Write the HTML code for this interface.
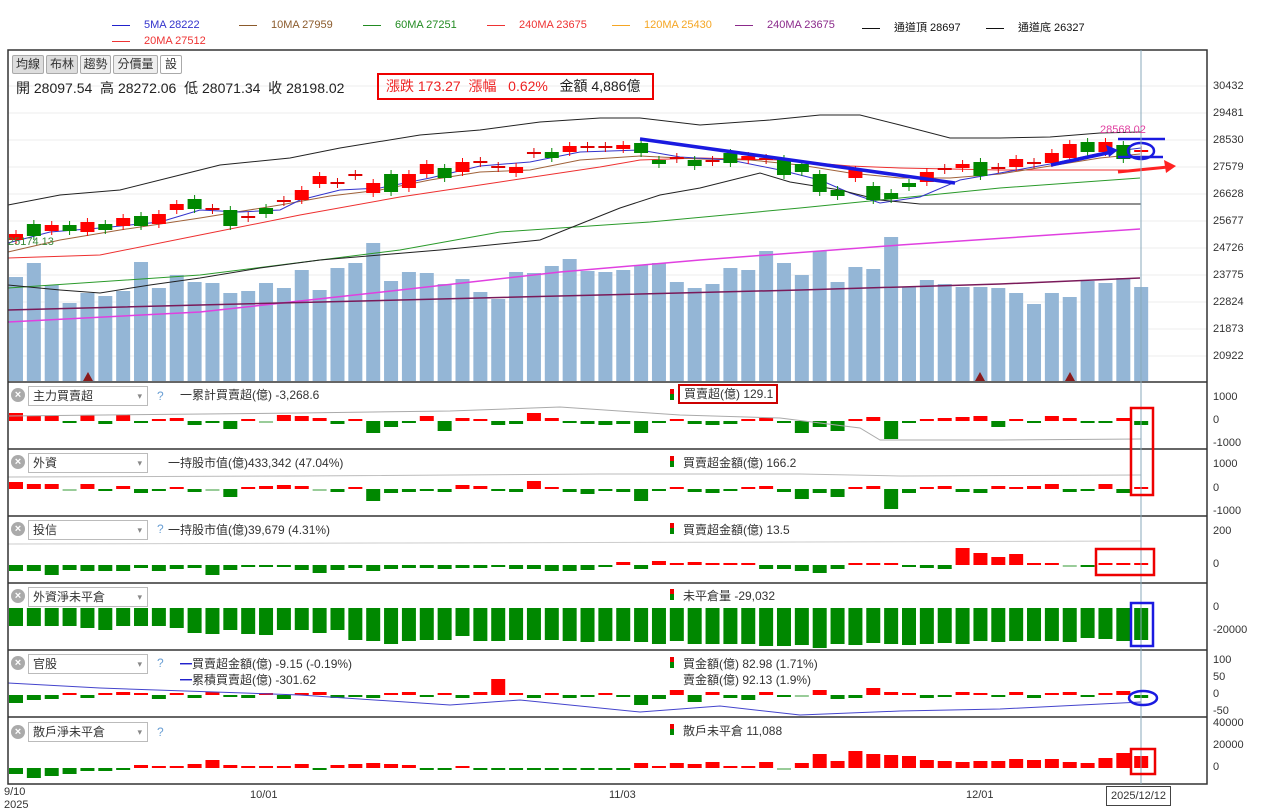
<!DOCTYPE html>
<html><head><meta charset="utf-8">
<style>
*{margin:0;padding:0;box-sizing:border-box}
body{width:1267px;height:812px;background:#fff;position:relative;overflow:hidden;font-family:"Liberation Sans","Noto Sans CJK TC",sans-serif;color:#333}
.t{position:absolute;white-space:nowrap;font-size:12px}
.lg{position:absolute;font-size:11px;white-space:nowrap}
.lg i{display:inline-block;width:18px;height:1px;vertical-align:middle;margin-right:14px}
.btn{position:absolute;top:55px;height:19px;border:1px solid #aaa;font-size:12px;line-height:17px;text-align:center;background:#ddd;border-radius:2px}
.dd{position:absolute;left:28px;width:120px;height:20px;border:1px solid #bbb;font-size:12px;line-height:18px;padding-left:4px;background:#fff}
.dd:after{content:"▾";position:absolute;right:5px;top:0;font-size:9px;color:#888}
.cx{position:absolute;left:11px;width:14px;height:14px;border-radius:50%;background:#aaa;color:#fff;font-size:11px;line-height:14px;text-align:center;font-weight:bold}
.q{position:absolute;left:157px;font-size:12px;color:#6a9fd4}
.ax{position:absolute;left:1213px;font-size:11px;color:#333}
</style></head><body>
<div class="lg" style="left:112px;top:19px"><i style="background:#2222cc"></i><span style="color:#3333cc">5MA 28222</span></div>
<div class="lg" style="left:239px;top:19px"><i style="background:#8b5a2b"></i><span style="color:#8b5a2b">10MA 27959</span></div>
<div class="lg" style="left:363px;top:19px"><i style="background:#228b22"></i><span style="color:#228b22">60MA 27251</span></div>
<div class="lg" style="left:487px;top:19px"><i style="background:#e33"></i><span style="color:#e33">240MA 23675</span></div>
<div class="lg" style="left:612px;top:19px"><i style="background:#f5a623"></i><span style="color:#f5a623">120MA 25430</span></div>
<div class="lg" style="left:735px;top:19px"><i style="background:#8b2a8b"></i><span style="color:#8b2a8b">240MA 23675</span></div>
<div class="lg" style="left:862px;top:19px"><i style="background:#111"></i><span style="color:#111">通道頂 28697</span></div>
<div class="lg" style="left:986px;top:19px"><i style="background:#111"></i><span style="color:#111">通道底 26327</span></div>
<div class="lg" style="left:112px;top:35px"><i style="background:#e33"></i><span style="color:#e33">20MA 27512</span></div>

<svg id="s" width="1267" height="812" style="position:absolute;left:0;top:0"></svg>

<div class="btn" style="left:12px;width:32px">均線</div>
<div class="btn" style="left:46px;width:32px">布林</div>
<div class="btn" style="left:80px;width:31px;background:#eee">趨勢</div>
<div class="btn" style="left:113px;width:45px;background:#eee">分價量</div>
<div class="btn" style="left:160px;width:22px;background:#fff">設</div>
<div class="t" style="left:16px;top:78px;font-size:14px;color:#222">開 28097.54&nbsp; 高 28272.06&nbsp; 低 28071.34&nbsp; 收 28198.02</div>
<div class="t" style="left:377px;top:73px;width:277px;height:27px;border:2px solid #e00;font-size:14px;line-height:23px;padding-left:7px;color:#e22">漲跌 173.27&nbsp; 漲幅&nbsp;&nbsp; 0.62%&nbsp;&nbsp; <span style="color:#222">金額 4,886億</span></div>
<div class="t" style="left:1100px;top:124px;font-size:11px;color:#e040a0">28568.02</div>
<div class="t" style="left:8px;top:236px;font-size:11px;color:#3a8a3a">25174.13</div>

<div class="ax" style="top:80px">30432</div><div class="ax" style="top:107px">29481</div><div class="ax" style="top:134px">28530</div><div class="ax" style="top:161px">27579</div><div class="ax" style="top:188px">26628</div><div class="ax" style="top:215px">25677</div><div class="ax" style="top:242px">24726</div><div class="ax" style="top:269px">23775</div><div class="ax" style="top:296px">22824</div><div class="ax" style="top:323px">21873</div><div class="ax" style="top:350px">20922</div>
<div class="ax" style="top:391px">1000</div><div class="ax" style="top:414px">0</div><div class="ax" style="top:437px">-1000</div>
<div class="ax" style="top:458px">1000</div><div class="ax" style="top:482px">0</div><div class="ax" style="top:505px">-1000</div>
<div class="ax" style="top:525px">200</div><div class="ax" style="top:558px">0</div>
<div class="ax" style="top:601px">0</div><div class="ax" style="top:624px">-20000</div>
<div class="ax" style="top:654px">100</div><div class="ax" style="top:671px">50</div><div class="ax" style="top:688px">0</div><div class="ax" style="top:705px">-50</div>
<div class="ax" style="top:717px">40000</div><div class="ax" style="top:739px">20000</div><div class="ax" style="top:761px">0</div>

<div class="cx" style="top:388px">×</div><div class="dd" style="top:386px">主力買賣超</div><div class="q" style="top:389px">?</div>
<div class="t" style="left:180px;top:386px">一累計買賣超(億) -3,268.6</div>
<div class="t" style="left:678px;top:384px;width:100px;height:20px;border:2px solid #c00;line-height:16px;padding-left:4px">買賣超(億) 129.1</div>
<div class="cx" style="top:455px">×</div><div class="dd" style="top:453px">外資</div>
<div class="t" style="left:168px;top:454px">一持股市值(億)433,342 (47.04%)</div>
<div class="t" style="left:683px;top:454px">買賣超金額(億) 166.2</div>
<div class="cx" style="top:522px">×</div><div class="dd" style="top:520px">投信</div><div class="q" style="top:522px">?</div>
<div class="t" style="left:168px;top:521px">一持股市值(億)39,679 (4.31%)</div>
<div class="t" style="left:683px;top:521px">買賣超金額(億) 13.5</div>
<div class="cx" style="top:589px">×</div><div class="dd" style="top:587px">外資淨未平倉</div>
<div class="t" style="left:683px;top:587px">未平倉量 -29,032</div>
<div class="cx" style="top:656px">×</div><div class="dd" style="top:654px">官股</div><div class="q" style="top:656px">?</div>
<div class="t" style="left:180px;top:655px"><span style="color:#22c">━</span>買賣超金額(億) -9.15 (-0.19%)</div>
<div class="t" style="left:180px;top:671px"><span style="color:#22c">━</span>累積買賣超(億) -301.62</div>
<div class="t" style="left:683px;top:655px">買金額(億) 82.98 (1.71%)</div>
<div class="t" style="left:683px;top:671px">賣金額(億) 92.13 (1.9%)</div>
<div class="cx" style="top:725px">×</div><div class="dd" style="top:722px">散戶淨未平倉</div><div class="q" style="top:725px">?</div>
<div class="t" style="left:683px;top:722px">散戶未平倉 11,088</div>

<div class="t" style="left:4px;top:786px;font-size:11px">9/10</div>
<div class="t" style="left:4px;top:799px;font-size:11px">2025</div>
<div class="t" style="left:250px;top:789px;font-size:11px">10/01</div>
<div class="t" style="left:609px;top:789px;font-size:11px">11/03</div>
<div class="t" style="left:966px;top:789px;font-size:11px">12/01</div>
<div class="t" style="left:1106px;top:786px;width:65px;height:20px;border:1px solid #444;background:#fff;font-size:11px;line-height:18px;text-align:center">2025/12/12</div>

<script>
var S=document.getElementById('s'),NS='http://www.w3.org/2000/svg',h='';
function R(x,y,w,hh,f,extra){h+='<rect x="'+x+'" y="'+y+'" width="'+w+'" height="'+hh+'" fill="'+f+'" '+(extra||'')+'/>';}
function L(p,c,w){h+='<polyline points="'+p+'" fill="none" stroke="'+c+'" stroke-width="'+(w||1)+'"/>';}
function X(i){return 16+17.86*i;}
// grid
[86,113,140,167,194,221,248,275,302,329,356].forEach(function(y){L('8,'+y+' 1207,'+y,'#eee');});
// volume
var vol=[277,263,285,303,293,296,291,262,288,275,282,283,293,291,283,288,270,290,268,263,243,281,272,273,284,279,292,299,272,273,266,259,271,272,270,265,263,282,288,284,268,270,251,263,275,251,282,267,269,237,287,280,284,287,287,288,293,304,293,297,281,283,278,287];
vol.forEach(function(v,i){R(X(i)-7,v,14,381-v,'#94b6d6');});
// lines
L('8,322 200,312 400,290 560,272 700,260 900,245 1140,229','#e040e0',1.5);
L('8,310 200,305 400,300 600,295 800,290 1000,284 1140,278','#7a1a5a',1.5);
L('8,288 200,275 400,250 500,232 650,222 800,208 900,198 1000,188 1140,178','#2a9a2a');
L('8,258 100,255 200,235 300,215 400,197 500,182 600,167 640,160 700,158 780,160 850,166 900,168 1000,170 1140,170','#ee3030');
L('8,252 60,240 120,230 200,218 280,205 330,196 380,190 430,180 480,172 530,170 580,160 640,156 700,159 750,160 800,165 850,173 900,178 950,178 1000,174 1050,166 1100,158 1140,154','#a0623a');
L('8,243 50,232 100,228 160,222 200,210 240,212 280,210 300,200 340,190 380,188 430,178 480,166 530,162 580,152 640,150 680,157 730,160 780,170 820,180 850,193 880,203 920,197 960,180 1000,173 1050,164 1100,153 1141,148','#3333cc');
L('8,205 60,195 120,190 180,175 220,165 290,158 340,148 420,135 480,130 540,122 600,118 640,118 700,125 770,120 820,115 860,115 900,125 950,138 1000,138 1050,137 1100,133 1141,132','#222');
L('8,285 60,290 100,293 150,285 200,278 260,268 320,260 380,255 440,250 500,244 540,240 580,224 620,208 660,195 700,188 760,173 790,182 840,190 880,200 920,204 1000,204 1141,204','#222');
// candles
var cd=[[237,'r',3],[230,'g',6],[228,'r',3],[228,'g',3],[227,'r',5],[227,'g',3],[222,'r',4],[221,'g',5],[219,'r',5],[207,'r',3],[204,'g',5],[209,'c'],[218,'g',8],[217,'c'],[211,'g',3],[201,'c'],[195,'r',5],[180,'r',4],[183,'c'],[175,'c'],[188,'r',5],[183,'g',9],[181,'r',7],[169,'r',5],[173,'g',5],[167,'r',5],[162,'c'],[167,'c'],[170,'r',3],[153,'c'],[155,'g',3],[149,'r',3],[147,'c'],[147,'c'],[147,'r',2],[148,'g',5],[162,'g',2],[158,'c'],[163,'g',3],[161,'c'],[158,'g',5],[158,'r',2],[159,'c'],[167,'g',8],[168,'g',4],[183,'g',9],[193,'g',3],[174,'r',4],[193,'g',7],[196,'g',3],[185,'g',2],[177,'r',5],[169,'c'],[166,'r',2],[169,'g',7],[168,'c'],[163,'r',4],[163,'c'],[158,'r',5],[151,'r',7],[147,'g',5],[147,'r',5],[152,'g',7],[151,'r',1]];
cd.forEach(function(c,i){var x=X(i),col=c[1]=='r'?'#f00':c[1]=='g'?'#080':'#d00';var hh=c[2]||1;
 L(x+','+(c[0]-hh-4)+' '+x+','+(c[0]+hh+4),col);R(x-7,c[0]-hh,14,hh*2,col);});
// triangles
[88,980,1070].forEach(function(x){h+='<polygon points="'+(x-5)+',381 '+(x+5)+',381 '+x+',372" fill="#8b1a1a"/>';});
// annotations main
L('640,139 955,183','#1a1ae0',3.5);
L('1051,165 1112,152','#1a1ae0',3.5);h+='<polygon points="1118,150 1106,145 1109,157" fill="#1a1ae0"/>';
L('1118,139 1165,139','#1a1ae0',2.5);L('1118,157 1163,157','#1a1ae0',2.5);
h+='<ellipse cx="1141" cy="151" rx="13" ry="8" fill="none" stroke="#1a1ae0" stroke-width="2.5"/>';
L('1118,172 1168,167','#f22',3);h+='<polygon points="1176,166 1164,160 1166,173" fill="#f22"/>';
// panel bars
function P(z,arr,sc,cl){arr.forEach(function(v,i){if(i>63)return;var x=X(i);var hh=Math.max(Math.abs(v)*sc,2);var col=v>0?(cl||'#f00'):v<0?'#080':'#9c9';if(v>0)R(x-7,z-hh,14,hh,col);else R(x-7,z,14,hh,col);});}
var p1=[8,5,5,-2,6,-3,6,-1,1,3,-4,-2,-8,2,0,6,5,3,-3,2,-12,-6,-1,5,-10,3,1,-4,-3,8,3,-2,-3,-4,-3,-12,-1,1,-3,-4,-3,2,3,-2,-12,-6,-10,1,4,-18,-2,1,3,4,5,-6,1,-1,5,3,-2,-1,3,-4];
var p2=[7,5,5,0,5,-2,3,-4,-2,2,-3,0,-8,1,3,4,3,0,-3,2,-12,-4,-3,-2,-3,4,3,-2,-3,8,2,-3,-5,-2,-3,-12,-2,2,-3,-4,-2,2,3,-3,-10,-4,-8,2,3,-20,-4,1,3,-3,-4,3,2,3,5,-3,-1,5,-4,2];
var p3=[-6,-6,-10,-5,-6,-6,-6,-3,-6,-4,-3,-10,-5,-1,-1,-1,-5,-8,-5,-3,-6,-4,-3,-3,-4,-3,-3,-2,-4,-4,-6,-6,-5,-1,3,-4,4,1,3,2,1,2,-4,-4,-6,-8,-4,1,2,1,-1,-3,-4,17,12,8,11,2,2,0,-1,1,1,1];
var p4=[-18,-18,-18,-18,-20,-22,-18,-18,-18,-20,-25,-26,-22,-26,-27,-22,-22,-25,-22,-32,-33,-36,-33,-32,-32,-28,-33,-33,-32,-32,-32,-33,-34,-33,-33,-34,-36,-33,-36,-36,-36,-36,-38,-38,-37,-40,-36,-37,-35,-36,-37,-36,-35,-36,-33,-34,-33,-33,-33,-34,-30,-31,-33,-32];
var p5=[-8,-5,-4,2,-3,2,3,2,-4,2,-3,3,-2,-3,2,-4,2,3,-3,-2,-3,2,3,-2,2,-3,3,16,2,-3,2,-3,-2,2,-2,-10,-4,5,-7,3,-3,-5,3,-2,0,5,-4,-3,7,3,2,-3,-2,3,2,-2,3,-3,2,3,-2,2,4,-3];
var p6=[-6,-10,-8,-6,-3,-3,-2,3,2,2,4,8,3,2,2,2,4,-2,3,4,5,4,3,-2,-2,2,-2,-2,-2,-2,-2,-2,-2,-2,-2,5,2,5,4,6,2,2,6,0,5,14,7,17,14,13,12,8,7,6,7,7,9,8,9,6,5,10,15,12];
P(421,p1,1);P(489,p2,1);P(565,p3,1);P(608,p4,1,'#080');P(695,p5,1);P(768,p6,1);
L('8,416 300,413 450,411 560,407 680,415 780,418 860,428 880,440 1000,440 1141,439','#aaa');
L('8,477 300,476 600,474 800,474 900,476 1141,475','#bbb');
L('8,544 400,543 800,542 1141,541','#ccc');
L('8,683 100,688 300,695 450,705 520,700 640,712 720,706 800,715 900,711 1000,709 1141,702','#44c');
// panel borders
[382,449,516,583,650,717].forEach(function(y){L('8,'+y+' 1207,'+y,'#333',1.5);});
R(8,50,1199,734,'none','stroke="#333" stroke-width="1.5"');
L('1141,50 1141,784','#8ab',1);
// annotation boxes
R(1131,408,22,87,'none','stroke="#e00" stroke-width="2.5"');
R(1096,549,58,26,'none','stroke="#e00" stroke-width="2.5"');
R(1131,603,22,43,'none','stroke="#1a1ae0" stroke-width="2.5"');
h+='<ellipse cx="1143" cy="698" rx="14" ry="7" fill="none" stroke="#1a1ae0" stroke-width="2.5"/>';
R(1131,749,24,25,'none','stroke="#e00" stroke-width="2.5"');
// legend color markers
[389,456,523,589,657,724].forEach(function(y){R(670,y,4,5,'#e00');R(670,y+5,4,6,'#080');});
S.innerHTML=h;
</script>
</body></html>
